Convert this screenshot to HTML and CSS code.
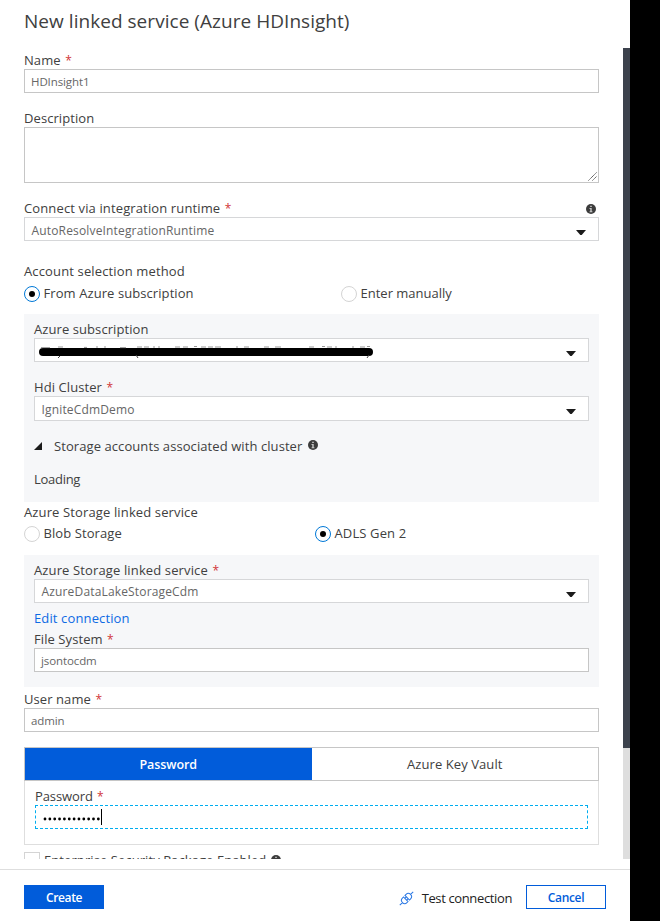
FILE: index.html
```html
<!DOCTYPE html>
<html lang="en">
<head>
<meta charset="utf-8">
<title>New linked service (Azure HDInsight)</title>
<link rel="stylesheet" href="styles.css">
</head>
<body>
<svg class="defs" aria-hidden="true">
  <symbol id="info" viewBox="0 0 10 10"><circle cx="5" cy="5" r="5" fill="#3c3c3c"/><path d="M4.2 1.8h1.6v1.3H4.2zM3.5 4h2.2v3.2h.7v1H3.6v-1h.7V5h-.8z" fill="#c8c8c8"/></symbol>
  <symbol id="caret" viewBox="0 0 10 5"><path d="M0 0h10L5.7 5H4.3z" fill="#1b1b1b"/></symbol>
</svg>
<main class="blade">
  <h1 class="title">New linked service (Azure HDInsight)</h1>
  <div class="viewport">
    <form class="form">
      <div class="field">
        <label class="label">Name <span class="req">*</span></label>
        <div class="input">HDInsight1</div>
      </div>
      <div class="field gap-l">
        <label class="label">Description</label>
        <div class="input textarea"><svg class="grip" viewBox="0 0 9 9"><path d="M.5 8.5l8-8M4.5 8.5l4-4" stroke="#444" stroke-width="1" stroke-dasharray="1.2 .5" fill="none"/></svg></div>
      </div>
      <div class="field gap-l">
        <div class="label spread"><span class="wide">Connect via integration runtime <span class="req">*</span></span><svg class="info end"><use href="#info"/></svg></div>
        <div class="select low"><span>AutoResolveIntegrationRuntime</span><svg class="caret"><use href="#caret"/></svg></div>
      </div>
      <div class="label account">Account selection method</div>
      <div class="radios first">
        <div class="radio on"><i class="dot"></i><span>From Azure subscription</span></div>
        <div class="radio"><i class="dot"></i><span class="snug">Enter manually</span></div>
      </div>
      <section class="panel cluster">
        <div class="field">
          <label class="label">Azure subscription</label>
          <div class="select"><div class="masked"><svg class="scribble" viewBox="0 0 336 16"><path d="M5 8H331" stroke="#000" stroke-width="8" stroke-linecap="round"/><path d="M3 3.6h9M20 3h5M46 3.4h3M58 3h2M66 3h2M82 3.6h6M99 3h5M106 3h5M115 3h2M121 2v2M137 3h5M145 3h5M156 2.5h3M163 3h5M170 3h5M177 3h6M198 3h2M206 3h5M226 3h5M237 3h6M271 3h5M284 2.5h3M289 3h5M298 2v2M315 2v2M322 3h5M329 2.5h3" stroke="#999" fill="none"/><path d="M22 12l-2 2M98 11l2 3M331 11l-2 3" stroke="#444" fill="none"/></svg></div><svg class="caret"><use href="#caret"/></svg></div>
        </div>
        <div class="field gap-l">
          <label class="label">Hdi Cluster <span class="req">*</span></label>
          <div class="select tall low"><span>IgniteCdmDemo</span><svg class="caret"><use href="#caret"/></svg></div>
        </div>
        <div class="label disclosure"><svg class="tri" viewBox="0 0 8 8"><path d="M8 0v8H0z" fill="#1b1b1b"/></svg><span>Storage accounts associated with cluster</span><svg class="info"><use href="#info"/></svg></div>
        <div class="label loading">Loading</div>
      </section>
      <div class="label storage wide">Azure Storage linked service</div>
      <div class="radios second">
        <div class="radio"><i class="dot"></i><span>Blob Storage</span></div>
        <div class="radio on"><i class="dot"></i><span class="wide">ADLS Gen 2</span></div>
      </div>
      <section class="panel lake">
        <div class="field">
          <label class="label wide">Azure Storage linked service <span class="req">*</span></label>
          <div class="select"><span>AzureDataLakeStorageCdm</span><svg class="caret"><use href="#caret"/></svg></div>
        </div>
        <a class="label link wide">Edit connection</a>
        <div class="field">
          <label class="label">File System <span class="req">*</span></label>
          <div class="input">jsontocdm</div>
        </div>
      </section>
      <div class="field user">
        <label class="label">User name <span class="req">*</span></label>
        <div class="input">admin</div>
      </div>
      <section class="auth">
        <div class="tabs"><div class="tab active">Password</div><div class="tab">Azure Key Vault</div></div>
        <div class="auth-body">
          <label class="label tight">Password <span class="req">*</span></label>
          <div class="secret"><svg class="bullets" viewBox="0 0 58 4"><path d="M2 2H56" stroke="#000" stroke-width="2.8" stroke-linecap="round" stroke-dasharray="0 4.85"/></svg><i class="cursor"></i></div>
        </div>
      </section>
      <div class="check"><i class="box"></i><span>Enterprise Security Package Enabled</span><svg class="info"><use href="#info"/></svg></div>
    </form>
    <div class="track"><div class="thumb"></div></div>
  </div>
  <footer class="footer">
    <button class="btn primary">Create</button>
    <div class="test"><svg class="plug" viewBox="0 0 15 15"><g transform="rotate(-45 7.500 7.500)" fill="none" stroke="#2b78e4" stroke-width="1"><path d="M-2 7.500H1.800M13.200 7.500H17M6.400 4.300H4.900A3.100 3.200 0 0 0 4.900 10.700H6.400zM8.600 4.300H10.100A3.100 3.200 0 0 1 10.100 10.700H8.600zM6.400 6.200H8.600M6.400 8.800H8.600"/></g></svg><span>Test connection</span></div>
    <button class="btn">Cancel</button>
  </footer>
</main>
</body>
</html>
```
FILE: styles.css
```css
* { box-sizing: border-box; }
body {
  margin: 0;
  background: #000;
  color: #404040;
  font: 13px/17px "Open Sans", "Noto Sans", sans-serif;
  letter-spacing: .08px;
}
svg { display: block; flex: none; overflow: visible; }
.defs { width: 0; height: 0; position: absolute; }
.blade { width: 630px; height: 921px; background: #fff; display: flex; flex-direction: column; overflow: hidden; }
.title { margin: 0; height: 48px; padding: 9px 24px 0; font-size: 19px; line-height: 24px; font-weight: 400; letter-spacing: .04px; white-space: nowrap; flex: none; }
.viewport { height: 811px; flex: none; display: flex; justify-content: space-between; overflow: hidden; }
.form { width: 575px; margin: 0 0 0 24px; padding-top: 4px; }
.track { width: 7px; background: #dedede; }
.thumb { height: 700px; background: #3c424d; }

.label { display: block; height: 17px; white-space: nowrap; }
.wide { letter-spacing: .13px; }
.snug { letter-spacing: 0; }
.spread { display: flex; justify-content: space-between; align-items: center; }
.req { color: #d13438; margin-left: 1px; font-size: 12px; }
.gap-l { margin-top: 17px; }
.info { width: 10px; height: 10px; }
.info.end { margin-right: 3px; margin-top: 1px; }
.input, .select { height: 24px; background: #fff; border: 1px solid #c6c6c6; display: flex; align-items: center; color: #666; }
.input { padding: 1px 6px 0; font-size: 11.5px; letter-spacing: -.1px; }
.select { padding: 0 12px 0 6.5px; border-color: #d6d7d9; justify-content: space-between; font-size: 12px; letter-spacing: .16px; }
.low span { padding-top: 2px; }
.tall { height: 25px; }
.textarea { height: 56px; padding: 0 1px 1px; align-items: flex-end; justify-content: flex-end; }
.grip { width: 9px; height: 9px; }
.caret { width: 10px; height: 5px; margin-top: 6px; }
.masked { margin-left: -4px; margin-top: 4px; }
.scribble { width: 336px; height: 16px; }

.account { margin-top: 22px; letter-spacing: .14px; }
.radios { display: grid; }
.first { grid-template-columns: 317px 1fr; margin-top: 6px; }
.second { grid-template-columns: 291px 1fr; margin-top: 5px; }
.radio { height: 16px; display: flex; align-items: center; gap: 3.5px; line-height: 16px; }
.radio span { margin-top: -2px; }
.dot { width: 16px; height: 16px; border: 1px solid #d4d4d4; border-radius: 50%; background: #fff; display: grid; place-items: center; }
.on .dot { border-color: #0078d7; }
.on .dot::after { content: ""; width: 6px; height: 6px; border-radius: 50%; background: #000; }

.panel { background: #f6f7f9; padding: 7px 10px 0; }
.cluster { margin-top: 12px; height: 188px; }
.disclosure { margin-top: 17px; display: flex; align-items: center; }
.tri { width: 8px; height: 8px; margin: -2px 12px 0 0; }
.disclosure .info { margin: -3px 0 0 6px; }
.loading { margin-top: 16px; letter-spacing: -.28px; }
.storage { margin-top: 2px; }
.lake { margin-top: 13px; height: 132px; }
.link { margin: 7px 0 4px; color: #0d6ae4; }
.user { margin-top: 4px; }

.auth { margin-top: 15px; height: 98px; border: 1px solid #dedede; }
.tabs { display: grid; grid-template-columns: 1fr 1fr; height: 34px; margin: -1px -1px 0; border: 1px solid #c6c6c6; }
.tab { display: grid; place-items: center; }
.active { background: #015cda; color: #fff; font-weight: 600; font-size: 12.5px; letter-spacing: -.05px; }
.auth-body { padding: 7px 10px; }
.tight { letter-spacing: -.1px; }
.secret { height: 24px; border: 1px dashed #00adef; display: flex; align-items: center; padding-left: 7px; }
.bullets { width: 58px; height: 4px; margin-top: 3px; }
.cursor { width: 1px; height: 16px; background: #000; }
.check { margin-top: 7px; height: 16px; display: flex; align-items: center; white-space: nowrap; }
.box { width: 16px; height: 16px; border: 1px solid #d4d4d4; margin-right: 4px; }
.check .info { margin-left: 5px; }

.footer { margin-top: 10px; flex: 1; border-top: 1px solid #dedede; padding: 15px 24px 0; display: flex; align-items: flex-start; }
.btn { width: 80px; height: 24px; padding: 1px 0 0; border: 1px solid #015cda; background: #fff; color: #015cda; font: 600 12px/21px "Open Sans", sans-serif; letter-spacing: -.35px; }
.primary { background: #015cda; color: #fff; }
.test { display: flex; align-items: center; height: 26px; margin-left: auto; margin-right: 14px; gap: 8px; letter-spacing: -.37px; color: #222; white-space: nowrap; }
.plug { width: 15px; height: 15px; }
```
